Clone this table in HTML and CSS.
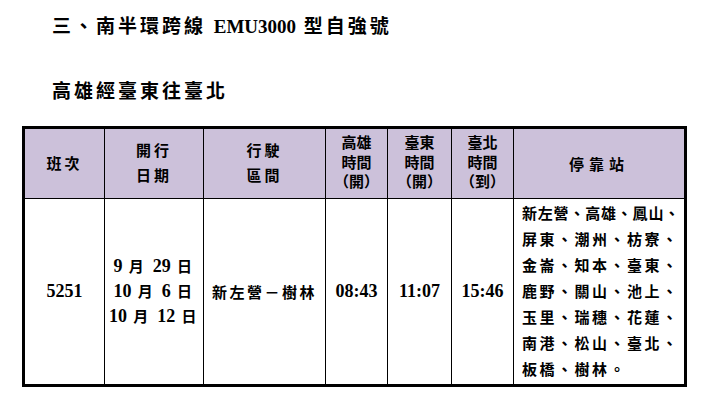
FILE: index.html
```html
<!DOCTYPE html>
<html lang="zh-Hant">
<head>
<meta charset="utf-8">
<title>南半環跨線 EMU3000 型自強號</title>
<link rel="stylesheet" href="styles.css">
</head>
<body>
<div class="page">
  <h1 class="title">三、南半環跨線 <span class="latin">EMU3000</span> 型自強號</h1>
  <h2 class="subtitle">高雄經臺東往臺北</h2>
  <table class="timetable">
    <thead>
      <tr>
        <th class="c1 wide">班次</th>
        <th class="c2 wide two">開行<br>日期</th>
        <th class="c3 wide two">行駛<br>區間</th>
        <th class="c4 three">高雄<br>時間<br>（開）</th>
        <th class="c5 three">臺東<br>時間<br>（開）</th>
        <th class="c6 three">臺北<br>時間<br>（到）</th>
        <th class="c7 stopsh">停靠站</th>
      </tr>
    </thead>
    <tbody>
      <tr>
        <td class="num-cell"><span class="num">5251</span></td>
        <td class="dates"><span class="num">9</span> 月 <span class="num">29</span> 日<br><span class="num">10</span> 月 <span class="num">6</span> 日<br><span class="num">10</span> 月 <span class="num">12</span> 日</td>
        <td class="route">新左營－樹林</td>
        <td class="num-cell"><span class="num">08:43</span></td>
        <td class="num-cell"><span class="num">11:07</span></td>
        <td class="num-cell"><span class="num">15:46</span></td>
        <td class="stops"><span class="tight">新左營、高雄、鳳山、</span><br>屏東、潮州、枋寮、<br>金崙、知本、臺東、<br>鹿野、關山、池上、<br>玉里、瑞穗、花蓮、<br>南港、松山、臺北、<br>板橋、樹林。</td>
      </tr>
    </tbody>
  </table>
</div>
</body>
</html>
```
FILE: styles.css
```css
html, body {
  margin: 0;
  padding: 0;
  background: #ffffff;
  color: #000000;
}

.page {
  padding: 15px 0 0 22px;
  font-family: "Liberation Serif", "Noto Sans CJK TC", serif;
  font-weight: bold;
}

.title {
  margin: 0 0 0 30px;
  font-size: 19px;
  line-height: 24px;
  letter-spacing: 3px;
  font-weight: bold;
}

.title .latin {
  letter-spacing: 0;
}

.subtitle {
  margin: 41px 0 0 30px;
  font-size: 19px;
  line-height: 24px;
  letter-spacing: 3px;
  font-weight: bold;
}

.timetable {
  margin-top: 22px;
  width: 665px;
  table-layout: fixed;
  border-collapse: separate;
  border-spacing: 0;
  border: 3px solid #000;
}

.timetable th,
.timetable td {
  box-sizing: border-box;
  padding: 0;
  text-align: center;
  vertical-align: middle;
  border-right: 1px solid #000;
  font-weight: bold;
}

.timetable th:last-child,
.timetable td:last-child {
  border-right: none;
}

.timetable th {
  height: 70px;
  background: #ccc1da;
  border-bottom: 1px solid #000;
  font-size: 15px;
}

.timetable td {
  height: 185px;
  font-size: 15px;
  letter-spacing: 2.5px;
}

.c1 { width: 80px; }
.c2 { width: 99px; }
.c3 { width: 122px; }
.c4 { width: 62px; }
.c5 { width: 64px; }
.c6 { width: 62px; }
.c7 { width: 170px; }

.wide {
  letter-spacing: 3px;
  padding-left: 3px;
  line-height: 20px;
}

.two {
  line-height: 25px;
  padding-top: 3px;
}

.three {
  font-size: 14px;
  line-height: 19.5px;
  letter-spacing: 0;
  padding-top: 2px;
}

.stopsh {
  letter-spacing: 5px;
  padding-left: 5px;
}

.num {
  font-size: 18px;
  letter-spacing: 0;
}

.num-cell {
  padding-top: 2px;
}

.dates {
  line-height: 24px;
  letter-spacing: 1px;
  padding-top: 2px;
}

.route {
  letter-spacing: 2.5px;
  padding-top: 2px;
}

.timetable td.stops {
  text-align: left;
  line-height: 26px;
  padding: 0 0 0 8px;
  white-space: nowrap;
}

.tight {
  letter-spacing: 0.8px;
}
```
